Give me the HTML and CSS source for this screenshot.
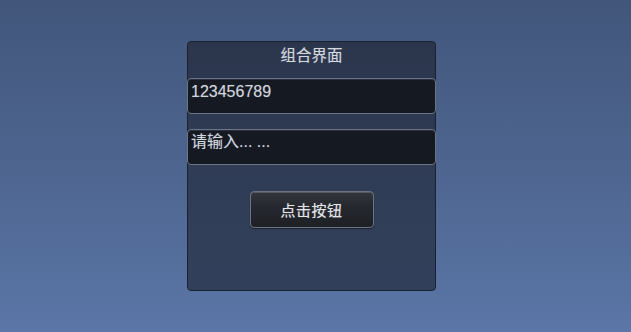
FILE: index.html
```html
<!DOCTYPE html>
<html lang="zh">
<head>
<meta charset="utf-8">
<link rel="stylesheet" href="styles.css">
</head>
<body>
<div class="stage">
  <div class="panel">
    <div class="title">组合界面</div>
    <div class="field">123456789</div>
    <div class="field second">请输入... ...</div>
    <div class="actions">
      <button class="btn">点击按钮</button>
    </div>
  </div>
</div>
</body>
</html>
```
FILE: styles.css
```css
html, body {
  margin: 0;
  padding: 0;
}
body {
  width: 631px;
  height: 332px;
  overflow: hidden;
  background: linear-gradient(180deg, #42567b 0%, #4d658f 50%, #5b76a7 100%);
  font-family: "Liberation Sans", "Noto Sans CJK SC", sans-serif;
}
.stage {
  padding: 41px 0 0 187px;
}
.panel {
  box-sizing: border-box;
  width: 249px;
  height: 250px;
  border: 1px solid #1a2232;
  border-radius: 4px;
  background: linear-gradient(180deg, #2b364d 0%, #303d56 60%, #33405b 100%);
  display: flex;
  flex-direction: column;
}
.title {
  height: 36px;
  box-sizing: border-box;
  padding-top: 2px;
  text-align: center;
  color: #d3d7de;
  font-size: 15.5px;
  line-height: 20px;
  font-family: "Noto Sans CJK SC", sans-serif;
  text-shadow: 0 0 1px rgba(210, 215, 225, 0.45);
}
.field {
  box-sizing: border-box;
  height: 36px;
  margin: 0 -1px;
  border: 1px solid #6b7486;
  border-radius: 4px;
  background: #151922;
  color: #d0d4dc;
  font-size: 16px;
  line-height: 18px;
  padding: 4px 3px;
  box-shadow: inset 0 1px 0 #2b3040;
  text-shadow: 0 0 1px rgba(210, 215, 225, 0.4);
}
.second {
  margin-top: 15px;
  font-family: "Liberation Sans", "Noto Sans CJK SC", sans-serif;
  font-size: 16px;
  padding-top: 3px;
}
.actions {
  display: flex;
  justify-content: center;
  padding: 26px 0 0 0;
}
.btn {
  box-sizing: border-box;
  width: 124px;
  height: 37px;
  border: 1px solid #6d737e;
  border-radius: 4px;
  background: linear-gradient(180deg, #33363d 0%, #24272d 45%, #1e2025 100%);
  color: #e2e4e8;
  font-size: 15px;
  font-family: "Noto Sans CJK SC", sans-serif;
  letter-spacing: 0.5px;
  box-shadow: inset 0 1px 0 #555a63, 0 1px 1px #1b2233;
  text-shadow: 0 0 1px rgba(230, 232, 236, 0.5);
  padding: 0;
}
```
